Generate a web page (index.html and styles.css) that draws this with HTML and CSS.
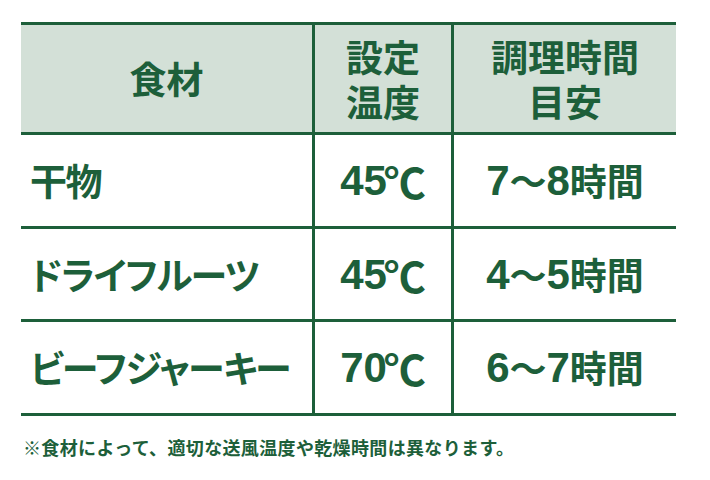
FILE: index.html
```html
<!DOCTYPE html>
<html lang="ja">
<head>
<meta charset="utf-8">
<link rel="stylesheet" href="styles.css">
</head>
<body>
<div class="page">
  <div class="tbl">
    <div class="cell head c1">食材</div>
    <div class="cell head c2">設定<br>温度</div>
    <div class="cell head c3">調理時間<br>目安</div>

    <div class="cell r1 c1 name">干物</div>
    <div class="cell r1 c2"><span class="num">45</span><span class="deg">℃</span></div>
    <div class="cell r1 c3"><span class="num">7</span>〜<span class="num">8</span>時間</div>

    <div class="cell r2 c1 name">ドライフルーツ</div>
    <div class="cell r2 c2"><span class="num">45</span><span class="deg">℃</span></div>
    <div class="cell r2 c3"><span class="num">4</span>〜<span class="num">5</span>時間</div>

    <div class="cell r3 c1 name">ビーフジャーキー</div>
    <div class="cell r3 c2"><span class="num">70</span><span class="deg">℃</span></div>
    <div class="cell r3 c3"><span class="num">6</span>〜<span class="num">7</span>時間</div>
  </div>
  <p class="note">※食材によって、適切な送風温度や乾燥時間は異なります。</p>
</div>
</body>
</html>
```
FILE: styles.css
```css
html, body {
  margin: 0;
  padding: 0;
  background: #ffffff;
}
body {
  font-family: "Noto Sans CJK JP", "Noto Sans", sans-serif;
  color: #1d5f3a;
}
.page {
  width: 710px;
  height: 480px;
  padding: 22px 0 0 21px;
  box-sizing: border-box;
}
.tbl {
  width: 655px;
  display: grid;
  grid-template-columns: 294px 139px 222px;
  grid-template-rows: 110px 94px 93px 91px;
  border-top: 3px solid #1d5f3a;
  border-bottom: 3px solid #1d5f3a;
}
.cell {
  box-sizing: border-box;
  display: flex;
  align-items: center;
  justify-content: center;
  text-align: center;
  font-size: 37px;
  font-weight: 700;
  line-height: 45px;
  white-space: nowrap;
}
.c1, .c2 {
  border-right: 3px solid #1d5f3a;
}
.head, .r1, .r2 {
  border-bottom: 3px solid #1d5f3a;
}
.head {
  background: #d3e0d7;
}
.name {
  justify-content: flex-start;
  padding-left: 9px;
  font-feature-settings: "palt";
  letter-spacing: -1.4px;
}
.num {
  font-family: "Liberation Sans", sans-serif;
  font-size: 42px;
}
.deg {
  font-size: 42px;
  margin-left: -3px;
}
.note {
  margin: 19px 0 0 2px;
  font-size: 18px;
  font-weight: 700;
  line-height: 24px;
  letter-spacing: 0.35px;
}
```
